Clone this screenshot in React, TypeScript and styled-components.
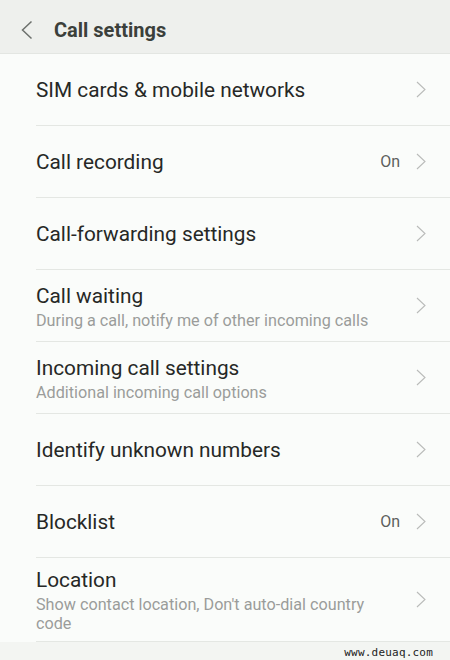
import styled, { createGlobalStyle } from "styled-components";

const Global = createGlobalStyle`
  html, body {
    margin: 0;
    padding: 0;
    background: #fafcfa;
  }
  body {
    font-family: Roboto, "Noto Sans", sans-serif;
    -webkit-font-smoothing: antialiased;
  }
`;

const Screen = styled.div`
  width: 450px;
  height: 660px;
  display: flex;
  flex-direction: column;
  background: #fafcfa;
  overflow: hidden;
`;

const Header = styled.div`
  height: 54px;
  box-sizing: border-box;
  padding: 6px 0 0 20px;
  display: flex;
  align-items: center;
  gap: 21px;
  background: #eef0ed;
  border-bottom: 1px solid #e3e6e2;
`;

const Title = styled.h1`
  margin: 0;
  font-size: 20px;
  font-weight: 700;
  color: #3b403b;
`;

const List = styled.div`
  display: flex;
  flex-direction: column;
`;

const Row = styled.div<{ $tall?: boolean }>`
  min-height: ${(p) => (p.$tall ? 83 : 71)}px;
  margin-left: 36px;
  padding-right: 24px;
  display: flex;
  align-items: center;
  gap: 12px;
  border-bottom: 1px solid #e4e7e3;
`;

const Texts = styled.div`
  flex: 1;
  display: flex;
  flex-direction: column;
  gap: 2px;
  padding-top: 2px;
`;

const Label = styled.div`
  font-size: 20.8px;
  color: #262826;
  line-height: 25px;
`;

const Sub = styled.div`
  font-size: 16.2px;
  color: #9a9c9a;
  line-height: 19px;
  padding-right: 18px;
`;

const Value = styled.span`
  font-size: 16px;
  color: #5c5f5c;
  margin-right: 4px;
`;

const Footer = styled.div`
  flex: 1;
  display: flex;
  justify-content: flex-end;
  align-items: flex-end;
  padding: 0 17px 1px 0;
  background: #f3f5f2;
`;

const Mark = styled.span`
  font-family: "DejaVu Sans Mono", monospace;
  font-size: 11px;
  color: #222;
  letter-spacing: 0.2px;
`;

const Chevron = ({ size = 10, color = "#b9bbb9" }: { size?: number; color?: string }) => (
  <svg width={size} height={size * 1.7} viewBox="0 0 10 17" fill="none">
    <path d="M1 1l8 7.5L1 16" stroke={color} strokeWidth="1.1" />
  </svg>
);

const BackArrow = () => (
  <svg width="13" height="20" viewBox="0 0 13 20" fill="none">
    <path d="M11.5 1.5L2.5 10l9 8.5" stroke="#6c706c" strokeWidth="1.5" />
  </svg>
);

type Item = { label: string; sub?: string; value?: string; tall?: boolean };

const items: Item[] = [
  { label: "SIM cards & mobile networks" },
  { label: "Call recording", value: "On" },
  { label: "Call-forwarding settings" },
  { label: "Call waiting", sub: "During a call, notify me of other incoming calls" },
  { label: "Incoming call settings", sub: "Additional incoming call options" },
  { label: "Identify unknown numbers" },
  { label: "Blocklist", value: "On" },
  {
    label: "Location",
    sub: "Show contact location, Don't auto-dial country code",
    tall: true,
  },
];

export default function App() {
  return (
    <Screen>
      <Global />
      <Header>
        <BackArrow />
        <Title>Call settings</Title>
      </Header>
      <List>
        {items.map((it) => (
          <Row key={it.label} $tall={it.tall}>
            <Texts>
              <Label>{it.label}</Label>
              {it.sub && <Sub>{it.sub}</Sub>}
            </Texts>
            {it.value && <Value>{it.value}</Value>}
            <Chevron />
          </Row>
        ))}
      </List>
      <Footer>
        <Mark>www.deuaq.com</Mark>
      </Footer>
    </Screen>
  );
}
